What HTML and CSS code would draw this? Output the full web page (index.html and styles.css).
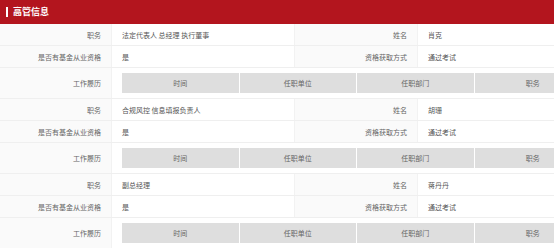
FILE: index.html
```html
<!DOCTYPE html>
<html lang="zh-CN">
<head>
<meta charset="utf-8">
<title>高管信息</title>
<link rel="stylesheet" href="styles.css">
</head>
<body>
<div class="page">
  <div class="header"><span class="bar"></span><span class="title">高管信息</span></div>

  <div class="person">
    <div class="row">
      <div class="label">职务</div><div class="value">法定代表人 总经理 执行董事</div>
      <div class="label">姓名</div><div class="value">肖克</div>
    </div>
    <div class="row">
      <div class="label">是否有基金从业资格</div><div class="value">是</div>
      <div class="label">资格获取方式</div><div class="value">通过考试</div>
    </div>
    <div class="row history">
      <div class="label">工作履历</div>
      <div class="value wide">
        <div class="hist"><div>时间</div><div>任职单位</div><div>任职部门</div><div>职务</div></div>
      </div>
    </div>
  </div>

  <div class="person">
    <div class="row">
      <div class="label">职务</div><div class="value">合规风控 信息填报负责人</div>
      <div class="label">姓名</div><div class="value">胡珊</div>
    </div>
    <div class="row">
      <div class="label">是否有基金从业资格</div><div class="value">是</div>
      <div class="label">资格获取方式</div><div class="value">通过考试</div>
    </div>
    <div class="row history">
      <div class="label">工作履历</div>
      <div class="value wide">
        <div class="hist"><div>时间</div><div>任职单位</div><div>任职部门</div><div>职务</div></div>
      </div>
    </div>
  </div>

  <div class="person">
    <div class="row">
      <div class="label">职务</div><div class="value">副总经理</div>
      <div class="label">姓名</div><div class="value">蒋丹丹</div>
    </div>
    <div class="row">
      <div class="label">是否有基金从业资格</div><div class="value">是</div>
      <div class="label">资格获取方式</div><div class="value">通过考试</div>
    </div>
    <div class="row history">
      <div class="label">工作履历</div>
      <div class="value wide">
        <div class="hist"><div>时间</div><div>任职单位</div><div>任职部门</div><div>职务</div></div>
      </div>
    </div>
  </div>
</div>
</body>
</html>
```

FILE: styles.css
```css
html, body {
  margin: 0;
  padding: 0;
  overflow: hidden;
  background: #fff;
}
body {
  font-family: "Noto Sans CJK SC", "Noto Sans", sans-serif;
  font-size: 7px;
  color: #555;
}
.page {
  width: 602px;
}
.header {
  height: 24px;
  background: #b3151e;
  display: flex;
  align-items: center;
  padding-left: 6px;
  gap: 5px;
}
.bar {
  width: 2px;
  height: 10px;
  background: #fff;
}
.title {
  color: #fff;
  font-weight: bold;
  font-size: 9px;
  line-height: 10px;
}
.row {
  display: grid;
  grid-template-columns: 112px 183px 123px 1fr;
  height: 22px;
  border-bottom: 1px solid #efefef;
  box-sizing: border-box;
}
.row.history {
  height: 31px;
}
.label, .value {
  display: flex;
  align-items: center;
  border-right: 1px solid #f2f2f2;
  box-sizing: border-box;
}
.label {
  justify-content: flex-end;
  padding-right: 10px;
  background: #fafafa;
  color: #666;
}
.value {
  padding-left: 10px;
  background: #fff;
}
.value.wide {
  grid-column: 2 / 5;
  padding-right: 10px;
}
.hist {
  flex: 1;
  display: grid;
  grid-template-columns: repeat(4, 1fr);
  gap: 1px;
  background: #fff;
  height: 20px;
}
.hist div {
  background: #dedede;
  color: #666;
  display: flex;
  align-items: center;
  justify-content: center;
}
```
